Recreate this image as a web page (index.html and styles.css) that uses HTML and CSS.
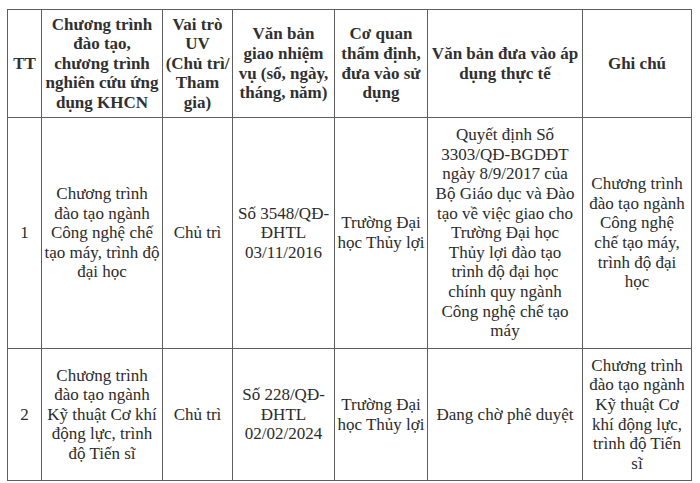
FILE: index.html
```html
<!DOCTYPE html>
<html lang="vi">
<head>
<meta charset="utf-8">
<link rel="stylesheet" href="styles.css">
</head>
<body>
<table class="grid">
  <colgroup>
    <col class="c1"><col class="c2"><col class="c3"><col class="c4"><col class="c5"><col class="c6"><col class="c7">
  </colgroup>
  <thead>
    <tr class="head">
      <th>TT</th>
      <th>Chương trình<br>đào tạo,<br>chương trình<br>nghiên cứu ứng<br>dụng KHCN</th>
      <th>Vai trò<br>UV<br>(Chủ trì/<br>Tham<br>gia)</th>
      <th>Văn bản<br>giao nhiệm<br>vụ (số, ngày,<br>tháng, năm)</th>
      <th>Cơ quan<br>thẩm định,<br>đưa vào sử<br>dụng</th>
      <th>Văn bản đưa vào áp<br>dụng thực tế</th>
      <th>Ghi chú</th>
    </tr>
  </thead>
  <tbody>
    <tr class="r1">
      <td>1</td>
      <td>Chương trình<br>đào tạo ngành<br>Công nghệ chế<br>tạo máy, trình độ<br>đại học</td>
      <td>Chủ trì</td>
      <td>Số 3548/QĐ-<br>ĐHTL<br>03/11/2016</td>
      <td>Trường Đại<br>học Thủy lợi</td>
      <td>Quyết định Số<br>3303/QĐ-BGDĐT<br>ngày 8/9/2017 của<br>Bộ Giáo dục và Đào<br>tạo về việc giao cho<br>Trường Đại học<br>Thủy lợi đào tạo<br>trình độ đại học<br>chính quy ngành<br>Công nghệ chế tạo<br>máy</td>
      <td>Chương trình<br>đào tạo ngành<br>Công nghệ<br>chế tạo máy,<br>trình độ đại<br>học</td>
    </tr>
    <tr class="r2">
      <td>2</td>
      <td>Chương trình<br>đào tạo ngành<br>Kỹ thuật Cơ khí<br>động lực, trình<br>độ Tiến sĩ</td>
      <td>Chủ trì</td>
      <td>Số 228/QĐ-<br>ĐHTL<br>02/02/2024</td>
      <td>Trường Đại<br>học Thủy lợi</td>
      <td>Đang chờ phê duyệt</td>
      <td>Chương trình<br>đào tạo ngành<br>Kỹ thuật Cơ<br>khí động lực,<br>trình độ Tiến<br>sĩ</td>
    </tr>
  </tbody>
</table>
</body>
</html>
```

FILE: styles.css
```css
html, body {
  margin: 0;
  padding: 0;
  background: #ffffff;
}

body {
  padding: 9px 0 0 7px;
  font-family: "Liberation Serif", "Times New Roman", serif;
  color: #2b2b2b;
}

.grid {
  border-collapse: collapse;
  table-layout: fixed;
  width: 684px;
  font-size: 17px;
  line-height: 19.6px;
}

.c1 { width: 34px; }
.c2 { width: 121px; }
.c3 { width: 70px; }
.c4 { width: 102px; }
.c5 { width: 93px; }
.c6 { width: 155px; }
.c7 { width: 109px; }

.grid th,
.grid td {
  border: 1px solid #5f5f5f;
  padding: 0;
  text-align: center;
  vertical-align: middle;
  white-space: nowrap;
  overflow: visible;
}

.grid th {
  font-weight: bold;
  color: #303030;
}

.head { height: 108px; }
.r1 { height: 231px; }
.r2 { height: 132px; }
```
